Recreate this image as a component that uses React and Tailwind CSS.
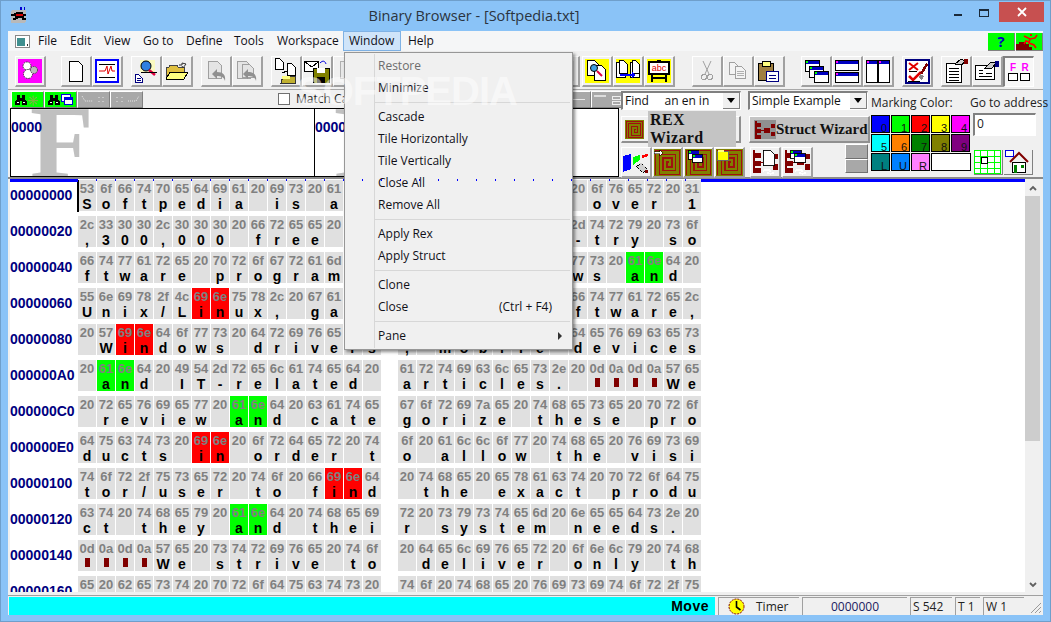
import React from "react";

const ui = "font-['Open_Sans',sans-serif]";
const sans = "font-['Liberation_Sans',sans-serif]";
const serif = "font-['Liberation_Serif',serif]";

const rows = [
  ["00000000", "Softpedia is a l", "ibrary of over 1"],
  ["00000020", ",300,000 free an", "d free-to-try so"],
  ["00000040", "ftware programs ", "for Windows and "],
  ["00000060", "Unix/Linux, game", "s, Mac software,"],
  ["00000080", " Windows drivers", ", mobile devices"],
  ["000000A0", " and IT-related ", "articles. \r\n\r\nWe"],
  ["000000C0", " review and cate", "gorize these pro"],
  ["000000E0", "ducts in order t", "o allow the visi"],
  ["00000100", "tor/user to find", " the exact produ"],
  ["00000120", "ct they and thei", "r system needs. "],
  ["00000140", "\r\n\r\nWe strive to", " deliver only th"],
  ["00000160", "e best products ", "to the visitor/u"],
];

function marks(s) {
  const m = {};
  for (const r of s.matchAll(/an|in/g)) {
    const c = r[0] === "an" ? "bg-[#00ff00]" : "bg-[#ff0000]";
    m[r.index] = c;
    m[r.index + 1] = c;
  }
  return m;
}

function Block({ text, first }) {
  const m = marks(text);
  return (
    <div className="flex gap-px w-[303px] shrink-0">
      {text.split("").map((ch, i) => (
        <div key={i} className={`relative w-[18px] h-[31px] shrink-0 flex flex-col items-center ${m[i] || "bg-[#e0e0e0]"}`}>
          {first && i === 0 && <div className="absolute -left-px top-0 w-[2px] h-[32px] bg-black" />}
          <div className={`h-[17px] leading-[18px] text-[13px] font-bold text-[#808080] ${sans}`}>
            {ch.charCodeAt(0).toString(16).padStart(2, "0")}
          </div>
          {ch === "\r" || ch === "\n" ? (
            <div className="w-[5px] h-[9px] mt-[1px] bg-[#800000]" />
          ) : (
            <div className={`h-[14px] leading-[14px] text-[14px] font-bold text-black ${sans}`}>{ch === " " ? "" : ch}</div>
          )}
        </div>
      ))}
    </div>
  );
}

function Btn({ children, className = "" }) {
  return (
    <div className={`flex items-center justify-center w-[31px] h-[31px] shrink-0 bg-[#f0f0f0] border-t border-l border-t-white border-l-white border-r-2 border-b-2 border-r-[#a0a0a0] border-b-[#a0a0a0] ${className}`}>
      {children}
    </div>
  );
}

const S = ({ children, w = 24, h = 24, vw, vh }) => (
  <svg width={w} height={h} viewBox={`0 0 ${vw || w} ${vh || h}`} shapeRendering="crispEdges">{children}</svg>
);

const Page = ({ x = 0, y = 0, w = 12, h = 16, stroke = "#000", fill = "#fff" }) => (
  <path d={`M${x + 0.5} ${y + 0.5}H${x + w - 4.5}L${x + w - 0.5} ${y + 4.5}V${y + h - 0.5}H${x + 0.5}Z`} fill={fill} stroke={stroke} />
);

const Win = ({ x, y, w, h, dot = "#00ff00" }) => (
  <g>
    <rect x={x + 0.5} y={y + 0.5} width={w} height={h} fill="#fff" stroke="#000" />
    <rect x={x + 1} y={y + 1} width={w - 1} height={3} fill="#0000c0" />
    <rect x={x + 1} y={y + 1} width={2} height={2} fill={dot} />
  </g>
);

const Spiral = ({ s = 28, overlay }) => (
  <svg width={s} height={s} viewBox="0 0 28 28" shapeRendering="crispEdges">
    <rect width="28" height="28" fill="#808000" />
    <path d="M1.5 26.5V1.5H26.5V26.5H5.5V5.5H22.5V22.5H9.5V9.5H18.5V18.5H13.5V13.5H15.5" fill="none" stroke="#a01010" strokeWidth="1.5" />
    {overlay}
  </svg>
);

const Hier = ({ c = "#800000" }) => (
  <g fill={c}>
    <rect x="3" y="4" width="7" height="6" />
    <rect x="3" y="13" width="7" height="6" />
    <rect x="3" y="21" width="7" height="6" />
    <rect x="1" y="1" width="2" height="26" />
    <rect x="14" y="11" width="8" height="7" />
    <rect x="23" y="5" width="6" height="6" />
    <rect x="23" y="17" width="6" height="6" />
    <rect x="10" y="14" width="5" height="1" />
  </g>
);

const Grid = () => (
  <svg width="27" height="24" viewBox="0 0 27 24" shapeRendering="crispEdges">
    <path d="M.5.5h26v23H.5zM.5 6.5h26M.5 12.5h26M.5 18.5h26M6.5.5v23M13.5.5v23M20.5.5v23" fill="#fff" stroke="#00ff00" />
    <rect x="7" y="7" width="6" height="6" fill="#fff" stroke="#000" />
  </svg>
);

const Swatch = ({ c, t, w = "w-[19px]" }) => (
  <div className={`h-[18px] ${w} ${c} border border-black relative shrink-0 text-[11px] leading-[11px] text-[#111] text-right pr-[2px] pt-[7px] ${sans}`}>{t}</div>
);

const Combo = ({ children, w }) => (
  <div className={`${w} h-[19px] bg-white border-t-2 border-l-2 border-t-[#808080] border-l-[#808080] border-r border-b border-r-white border-b-white flex items-center justify-between text-[12px] text-[#111] ${ui}`}>
    <span className="pl-[2px] whitespace-pre">{children}</span>
    <div className="w-[17px] h-[16px] bg-[#f0f0f0] border-r border-b border-r-[#808080] border-b-[#808080] flex items-center justify-center">
      <div className="w-0 h-0 border-x-[4px] border-x-transparent border-t-[5px] border-t-black" />
    </div>
  </div>
);

const SmallBtn = ({ children, c = "bg-[#00ff00]", w = "w-[33px]" }) => (
  <div className={`${w} h-[17px] ${c} shrink-0 border-t border-l border-t-white border-l-white border-r border-b border-r-[#808080] border-b-[#808080] flex items-center justify-center gap-[1px]`}>{children}</div>
);

const Binoc = () => (
  <svg width="12" height="10" viewBox="0 0 12 10" shapeRendering="crispEdges">
    <path d="M2 0h3v3h2V0h3v4l2 3v3H7V6H5v4H0V7l2-3z" fill="#000" />
    <path d="M2 7h2v1H2zM8 7h2v1H8z" fill="#fff" />
  </svg>
);

const Menu = () => {
  const Item = ({ t, dis, right, arrow }) => (
    <div className={`h-[22px] pl-[33px] pr-[20px] flex items-center justify-between text-[12px] whitespace-nowrap ${dis ? "text-[#6d6d6d]" : "text-[#101018]"}`}>
      <span>{t}</span>
      {right && <span>{right}</span>}
      {arrow && <div className="-mr-[10px] w-0 h-0 border-y-[4px] border-y-transparent border-l-[4px] border-l-[#333]" />}
    </div>
  );
  const Sep = () => <div className="ml-[30px] mr-[2px] h-px bg-[#d7d7d7] my-[3px]" style={{ marginBottom: 3 }} />;
  return (
    <div className={`absolute left-[343px] top-[51px] w-[229px] h-[298px] bg-[#f0f0f0] border border-[#979797] shadow-[2px_2px_3px_rgba(0,0,0,0.45)] pt-[2px] ${ui}`}>
      <div className="absolute left-[29px] top-[1px] bottom-[1px] w-px bg-[#d7d7d7]" />
      <div className="h-[0px]" />
      <Item t="Restore" dis />
      <Item t="Minimize" />
      <Sep />
      <Item t="Cascade" />
      <Item t="Tile Horizontally" />
      <Item t="Tile Vertically" />
      <Item t="Close All" />
      <Item t="Remove All" />
      <Sep />
      <Item t="Apply Rex" />
      <Item t="Apply Struct" />
      <Sep />
      <Item t="Clone" />
      <Item t="Close" right="(Ctrl + F4)" />
      <Sep />
      <Item t="Pane" arrow />
    </div>
  );
};

export default function App() {
  return (
    <div className="relative w-[1051px] h-[622px] overflow-hidden bg-[#8ac3f7] border border-[#6f9fcb] flex flex-col">
      {/* title */}
      <div className="h-[30px] shrink-0 flex items-start relative">
        <div className="pl-[9px] pt-[6px] w-[60px]">
          <svg width="18" height="17" viewBox="0 0 18 17" shapeRendering="crispEdges">
            <rect x="1" y="3" width="15" height="13" rx="2" fill="#b9b9b9" />
            <path d="M1 7h3V6h2V5h7v2h3v2h-2v2h2v2h-4v-2H8v1H6v1H3v-2h2V9H1z" fill="#000" />
            <path d="M6 7h7v2H6z" fill="#d00000" />
            <path d="M10 0h2v3h-2zM14 0h1v3h-1z" fill="#0000d0" />
          </svg>
        </div>
        <div className={`flex-1 text-center text-[14.5px] leading-[30px] text-[#2a3440] ${ui}`}>Binary Browser - [Softpedia.txt]</div>
        <div className="w-[60px] flex justify-end" />
        <div className="flex items-start mr-[-0px]">
          <div className="w-[22px] h-[21px] flex items-center justify-center mt-[1px]"><div className="w-[8px] h-[2px] mt-[4px] bg-[#1a2a3a]" /></div>
          <div className="w-[30px] h-[21px] flex items-center justify-center mt-[1px]"><div className="w-[10px] h-[8px] border border-t-2 border-[#1a2a3a]" /></div>
          <div className="w-[45px] h-[20px] bg-[#c75050] flex items-center justify-center mr-[6px] mt-[1px]">
            <svg width="10" height="10" viewBox="0 0 10 10"><path d="M1 1l8 8M9 1l-8 8" stroke="#fff" strokeWidth="1.8" /></svg>
          </div>
        </div>
      </div>

      {/* client */}
      <div className="ml-[7px] w-[1035px] h-[584px] flex flex-col bg-[#f0f0f0] shrink-0">
        {/* menu bar */}
        <div className={`h-[20px] shrink-0 bg-[#f5f6f7] flex items-center text-[12px] text-[#101018] ${ui}`}>
          <div className="w-[30px] pl-[7px] flex items-center">
            <svg width="15" height="13" viewBox="0 0 15 13" shapeRendering="crispEdges">
              <rect x=".5" y=".5" width="14" height="12" fill="#fff" stroke="#888" />
              <rect x="2" y="3" width="8" height="8" fill="#3f8f8f" />
              <rect x="12" y="9" width="1" height="2" fill="#333" />
            </svg>
          </div>
          <div className="w-[32px]">File</div>
          <div className="w-[34px]">Edit</div>
          <div className="w-[39px]">View</div>
          <div className="w-[43px]">Go to</div>
          <div className="w-[48px]">Define</div>
          <div className="w-[43px]">Tools</div>
          <div className="w-[66px]">Workspace</div>
          <div className="w-[58px] h-[20px] bg-[#cfe4f9] border border-[#7fb2e5] pl-[5px] leading-[18px]">Window</div>
          <div className="ml-[7px] w-[580px]">Help</div>
          <div className="w-[27px] h-[18px] mt-[2px] bg-[#00ff00] border-r border-b border-r-[#808080] border-b-[#808080] flex items-center justify-center text-[15px] font-bold text-[#0000c0] leading-none">?</div>
          <div className="w-[27px] h-[18px] mt-[2px] ml-px bg-[#00ff00] border-r border-b border-r-[#808080] border-b-[#808080] flex items-center justify-center">
            <svg width="26" height="17" viewBox="0 0 26 17" shapeRendering="crispEdges">
              <path d="M0 17v-6h3V9h7v2h3v3h3v3z" fill="#800000" />
              <path d="M8 3l6 3 5-1 2-3M14 6l-1 4 5 2 2 3M13 9l-3-1-2 3" fill="none" stroke="#ff0000" strokeWidth="1.6" shapeRendering="auto" />
              <circle cx="15" cy="2" r="1.5" fill="#ff0000" />
            </svg>
          </div>
        </div>

        {/* toolbar */}
        <div className="h-[39px] shrink-0 pl-[7px] pt-[5px] flex border-b border-b-[#a8a8a8]">
          <Btn>
            <div className="w-[24px] h-[24px] bg-[#ff00ff] flex items-center justify-center">
              <svg width="18" height="20" viewBox="0 0 18 20">
                <circle cx="6" cy="5" r="4" fill="#fff" stroke="#333" strokeDasharray="1.5 1" />
                <circle cx="7" cy="13" r="4.5" fill="#fff" stroke="#333" strokeDasharray="1.5 1" />
                <circle cx="13" cy="9" r="3.5" fill="#bbb" stroke="#444" strokeDasharray="1.5 1" />
              </svg>
            </div>
          </Btn>
          <div className="w-[15px] shrink-0" />
          <Btn><S w={14} h={21}><Page w={14} h={21} /></S></Btn>
          <Btn>
            <div className="w-[24px] h-[24px] border-2 border-[#0000ff] bg-white flex items-center justify-center">
              <svg width="18" height="14" viewBox="0 0 18 14">
                <path d="M1 .5h16M1 13.5h16" stroke="#000" shapeRendering="crispEdges" />
                <path d="M1 7h6l2-5 1 8 3-8 1 5h3" fill="none" stroke="#e00000" />
              </svg>
            </div>
          </Btn>
          <div className="w-[8px] shrink-0" />
          <Btn>
            <S w={24} h={24}>
              <Page x={1} y={15} w={8} h={9} stroke="#000080" />
              <path d="M3 19h4M3 21h4" stroke="#000080" />
              <rect x="6" y="1" width="15" height="12" fill="#ffffa0" opacity=".6" />
              <circle cx="12" cy="7" r="5" fill="#3080e0" stroke="#000" shapeRendering="auto" />
              <path d="M15 11l6 5" stroke="#e00040" strokeWidth="2.5" shapeRendering="auto" />
              <path d="M7 13h16" stroke="#000" />
            </S>
          </Btn>
          <Btn>
            <S w={22} h={18}>
              <path d="M0 5h3l1-2h7l1 2h6v11H0z" fill="#e0c040" stroke="#444" />
              <path d="M4 10h18l-4 7H0z" fill="#ffff80" stroke="#000" />
              <path d="M13 3h3V1l4 1-3 4-1-2" fill="none" stroke="#333" shapeRendering="auto" />
            </S>
          </Btn>
          <div className="w-[8px] shrink-0" />
          {[0, 1].map((k) => (
            <Btn key={k}>
              <S w={24} h={24}>
                <Page x={k ? 2 : 4} y={2} w={14} h={18} stroke="#a0a0a0" fill="#e4e4e4" />
                {k === 1 && <Page x={7} y={5} w={12} h={14} stroke="#a0a0a0" fill="#e4e4e4" />}
                <path d="M8 15l5-5v3c6 0 9 3 8 9-1-4-4-5-8-5v3z" fill="#909090" shapeRendering="auto" />
              </S>
            </Btn>
          ))}
          <div className="w-[8px] shrink-0" />
          <Btn>
            <S w={24} h={26}>
              <Page x={1} y={0} w={9} h={12} />
              <Page x={13} y={5} w={9} h={13} />
              <path d="M8 15l5-2" stroke="#000" />
              <path d="M9 18h12v7H7z" fill="#c0b030" stroke="#333" />
              <rect x="8" y="18" width="8" height="3" fill="#ffff80" />
            </S>
          </Btn>
          <Btn>
            <S w={26} h={24}>
              <rect x=".5" y="2.5" width="14" height="10" fill="#fff" stroke="#000" />
              <path d="M1 3l7 5 6-5" fill="none" stroke="#000" />
              <rect x="9" y="9" width="16" height="15" fill="#808000" stroke="#000" />
              <rect x="13" y="9" width="8" height="5" fill="#fff" />
              <rect x="13" y="18" width="8" height="6" fill="#000" />
              <path d="M16 4c3-3 5-2 6 1" fill="none" stroke="#0000e0" shapeRendering="auto" />
            </S>
          </Btn>
          <Btn><S w={24} h={24}><Page x={4} y={2} w={14} h={18} stroke="#b0b0b0" fill="#e8e8e8" /></S></Btn>
          <div className="w-[185px] shrink-0" />
          <Btn><div className="w-[20px] h-[20px] bg-[#e0e0e0]" /></Btn>
          <div className="w-[2px] shrink-0" />
          <Btn>
            <div className="w-[24px] h-[24px] bg-[#ffff00] flex items-center justify-center">
              <S w={20} h={22}>
                <Page x={0} y={0} w={12} h={16} />
                <Page x={7} y={5} w={12} h={16} />
                <circle cx="7" cy="8" r="3.5" fill="#40a0e0" stroke="#000" shapeRendering="auto" />
                <path d="M10 11l5 5" stroke="#e00040" strokeWidth="2" shapeRendering="auto" />
              </S>
            </div>
          </Btn>
          <Btn>
            <div className="w-[24px] h-[24px] bg-[#ffff00] flex items-center justify-center">
              <S w={24} h={22}>
                <Page x={0} y={2} w={10} h={16} />
                <Page x={3} y={0} w={9} h={14} />
                <Page x={14} y={2} w={10} h={16} />
                <Page x={16} y={0} w={8} h={14} />
                <path d="M4 15h14" stroke="#0000ff" strokeWidth="2" />
                <path d="M16 12l4 3-4 3z" fill="#0000ff" />
              </S>
            </div>
          </Btn>
          <Btn>
            <div className="w-[24px] h-[24px] bg-[#ffff00] flex items-center justify-center">
              <S w={22} h={22}>
                <rect x="1" y="2" width="20" height="12" fill="#fff" stroke="#000" strokeWidth="2" />
                <text x="11" y="11" textAnchor="middle" fontSize="9" fill="#e00000" fontFamily="Liberation Sans">abc</text>
                <path d="M4 15v7M18 15v7M4 18h14" stroke="#000" strokeWidth="2" />
                <path d="M9 0h4v2H9z" fill="#000" />
              </S>
            </div>
          </Btn>
          <div className="w-[17px] shrink-0" />
          <Btn>
            <S w={12} h={20}>
              <path d="M2 0l6 13M10 0L4 13" stroke="#a0a0a0" fill="none" shapeRendering="auto" />
              <circle cx="3" cy="16" r="2.5" fill="none" stroke="#a0a0a0" />
              <circle cx="9" cy="16" r="2.5" fill="none" stroke="#a0a0a0" />
            </S>
          </Btn>
          <Btn>
            <S w={18} h={18}>
              <Page x={0} y={0} w={10} h={13} stroke="#a0a0a0" fill="#f4f4f4" />
              <Page x={6} y={4} w={11} h={13} stroke="#a0a0a0" fill="#f4f4f4" />
              <path d="M8 9h7M8 11h7M8 13h7" stroke="#b0b0b0" />
            </S>
          </Btn>
          <Btn>
            <S w={22} h={22}>
              <rect x=".5" y="3.5" width="15" height="17" fill="#a08040" stroke="#000" />
              <rect x="4" y="1" width="8" height="5" fill="#ffff80" stroke="#000" />
              <rect x="8.5" y="11.5" width="12" height="10" fill="#fff" stroke="#000080" strokeWidth="1.5" />
              <path d="M11 15h7M11 18h7" stroke="#000080" />
            </S>
          </Btn>
          <div className="w-[16px] shrink-0" />
          <Btn>
            <S w={25} h={24}>
              <Win x={1} y={1} w={14} h={11} />
              <Win x={5} y={7} w={14} h={11} />
              <Win x={10} y={12} w={14} h={11} />
            </S>
          </Btn>
          <Btn>
            <S w={24} h={24}>
              <Win x={0} y={1} w={23} h={10} dot="#ff00ff" />
              <Win x={0} y={13} w={23} h={10} dot="#ff00ff" />
            </S>
          </Btn>
          <Btn>
            <S w={24} h={24}>
              <Win x={0} y={1} w={11} h={22} dot="#ff00ff" />
              <Win x={12} y={1} w={11} h={22} dot="#ff00ff" />
            </S>
          </Btn>
          <div className="w-[8px] shrink-0" />
          <Btn>
            <div className="w-[25px] h-[25px] border-2 border-[#000080] bg-white flex items-center justify-center">
              <S w={21} h={21}>
                <path d="M2 2l9 7M11 2L2 9" stroke="#e00000" strokeWidth="2" shapeRendering="auto" />
                <path d="M2 15l4 4 8-8" fill="none" stroke="#e00000" strokeWidth="2.5" shapeRendering="auto" />
                <path d="M2 10h8M1 20h12" stroke="#000" />
                <path d="M13 12l7-11 1 3-6 10z" fill="#800000" />
                <path d="M13 13l4 2-2 4-3-2z" fill="#888" />
              </S>
            </div>
          </Btn>
          <div className="w-[8px] shrink-0" />
          <Btn>
            <S w={24} h={24}>
              <path d="M2.5 4.5h15v19h-15z" fill="#fff" stroke="#000" strokeWidth="1.5" />
              <path d="M5 9h10M5 12h10M5 15h10M5 18h10M5 21h10" stroke="#000" />
              <path d="M11 5l6-5 4 2-3 4z" fill="#ccc" stroke="#000" />
              <rect x="20" y="0" width="4" height="5" fill="#800000" />
            </S>
          </Btn>
          <Btn>
            <S w={26} h={22}>
              <rect x="1.5" y="5.5" width="19" height="14" fill="#fff" stroke="#000" strokeWidth="1.5" />
              <path d="M5 10h4M5 13h4M12 13h6M5 16h13" stroke="#000" />
              <path d="M11 8l6-6 5 1-4 5z" fill="#ccc" stroke="#000" />
              <rect x="21" y="1" width="4" height="6" fill="#000080" />
            </S>
          </Btn>
          <div className="w-[31px] h-[31px] shrink-0 border-t-2 border-l-2 border-t-[#808080] border-l-[#808080] border-r border-b border-r-white border-b-white flex items-center justify-center bg-[#f8f8f8]">
            <div className={`grid grid-cols-2 gap-x-[2px] text-[10px] font-bold leading-[10px] text-[#ff00ff] text-center ${sans}`}>
              <span>F</span><span>R</span>
              <div className="w-[10px] h-[8px] bg-white border border-black" />
              <div className="w-[10px] h-[8px] bg-white border border-black" />
            </div>
          </div>
        </div>

        {/* mid band */}
        <div className="h-[89px] shrink-0 flex border-b-2 border-b-[#8a8a8a]">
          <div className="w-[611px] shrink-0 flex flex-col pl-[2px]">
            <div className="h-[18px] pl-px pt-px flex shrink-0">
              <SmallBtn><Binoc /><span className="text-[10px] leading-none text-[#000] font-bold">✳</span></SmallBtn>
              <SmallBtn><Binoc /><svg width="12" height="11" viewBox="0 0 12 11" shapeRendering="crispEdges"><rect x=".5" y=".5" width="9" height="7" fill="#fff" stroke="#0000e0" /><rect x="3.5" y="3.5" width="8" height="7" fill="#fff" stroke="#0000e0" /><rect x="4" y="4" width="7" height="2" fill="#0000e0" /></svg></SmallBtn>
              <SmallBtn c="bg-[#a8a8a8]">
                <svg width="26" height="9" viewBox="0 0 26 9"><path d="M1 1l3 5h8M18 2v2M18 6v1M22 2v2M22 6v1" stroke="#e8e8e8" fill="none" strokeDasharray="1 1" /></svg>
              </SmallBtn>
              <SmallBtn c="bg-[#a8a8a8]">
                <svg width="26" height="9" viewBox="0 0 26 9"><path d="M3 2v2M3 6v1M8 2v2M8 6v1M14 6h8l3-5" stroke="#e8e8e8" fill="none" strokeDasharray="1 1" /></svg>
              </SmallBtn>
              <div className="w-[135px] shrink-0" />
              <div className="w-[12px] h-[12px] mt-[2px] bg-white border border-[#707070] shrink-0" />
              <div className={`ml-[6px] w-[262px] shrink-0 text-[12px] leading-[16px] text-[#222] ${ui}`}>Match Case</div>
              <SmallBtn c="bg-[#a8a8a8]"><div className="w-[20px] h-px bg-[#e8e8e8]" /></SmallBtn>
              <SmallBtn c="bg-[#a8a8a8]">
                <svg width="28" height="12" viewBox="0 0 28 12" shapeRendering="crispEdges"><path d="M0 1h12v2H0z" fill="#ddd" /><path d="M18 2h8v3h-8zM18 7h8v3h-8z" fill="#a8a8a8" stroke="#eee" /></svg>
              </SmallBtn>
            </div>
            <div className="h-[71px] w-[609px] ml-0 border border-black bg-white flex overflow-hidden">
              <div className="relative w-[304px] shrink-0 border-r border-black overflow-hidden">
                <div className={`absolute left-[19px] top-[-22px] text-[104px] leading-[110px] font-bold text-[#c0c0c0] ${serif}`}>F</div>
                <div className={`absolute left-0 top-[8px] text-[14px] font-bold text-[#000080] ${sans}`}>0000</div>
              </div>
              <div className="relative flex-1 overflow-hidden">
                <div className={`absolute left-[19px] top-[-22px] text-[104px] leading-[110px] font-bold text-[#c0c0c0] ${serif}`}>F</div>
                <div className={`absolute left-0 top-[8px] text-[14px] font-bold text-[#000080] ${sans}`}>0000</div>
              </div>
            </div>
          </div>

          <div className="w-[252px] shrink-0 pl-[2px] flex flex-col">
            <div className="flex gap-[7px] mt-[1px]">
              <Combo w="w-[120px]">Find     an en in</Combo>
              <Combo w="w-[120px]">Simple Example</Combo>
            </div>
            <div className="flex gap-[8px] mt-[6px]">
              <div className={`w-[120px] h-[27px] border-t border-l border-t-white border-l-white border-r-2 border-b-2 border-r-[#909090] border-b-[#909090] flex items-center pl-[3px] text-[16px] font-bold text-[#111] ${serif}`}>
                <Spiral s={19} />
                <span className="ml-[4px] px-[2px] bg-[#c4c4c4] leading-[18px] tracking-[0.4px] flex-1 mr-[3px]">REX Wizard</span>
              </div>
              <div className={`w-[121px] h-[27px] bg-[#c4c4c4] border-t border-l border-t-white border-l-white border-r-2 border-b-2 border-r-[#909090] border-b-[#909090] flex items-center pl-[4px] text-[15px] font-bold text-[#111] whitespace-nowrap ${serif}`}>
                <div className="bg-[#909090] h-[19px] shrink-0 flex items-center">
                  <svg width="22" height="19" viewBox="0 0 30 27" shapeRendering="crispEdges"><Hier /></svg>
                </div>
                <span>Struct Wizard</span>
              </div>
            </div>
            <div className="flex mt-[4px] h-[31px]">
              <Btn>
                <S w={26} h={24}>
                  <path d="M0 6l8-2v15l-8 3z" fill="#0000ff" />
                  <path d="M10 7l7-2v5l-7 5z" fill="#00ff00" />
                  <path d="M19 5l6-1v2l-6 2z" fill="#ff0000" />
                  <path d="M13 17l5-4 6 6-3 4z" fill="#d0d0d0" stroke="#000" strokeDasharray="1 1" />
                  <rect x="22" y="20" width="3" height="3" fill="#800000" />
                </S>
              </Btn>
              <Btn><Spiral s={27} overlay={<path d="M0 3h6V1l3 3-3 3V5H0z" fill="#fff" stroke="#000" strokeWidth=".5" />} /></Btn>
              <Btn className="border-t-[#808080] border-l-[#808080]">
                <Spiral s={27} overlay={<g><Win x={3} y={1} w={11} h={9} /><Win x={7} y={5} w={11} h={9} /></g>} />
              </Btn>
              <Btn><Spiral s={27} overlay={<g><rect x="1.5" y="2.5" width="11" height="9" fill="#ffff00" stroke="#666" /><rect x="2" y="1" width="6" height="2" fill="#ffff80" /></g>} /></Btn>
              <div className="w-[5px] shrink-0" />
              <Btn className="bg-[#808080]">
                <svg width="27" height="27" viewBox="0 0 30 30" shapeRendering="crispEdges">
                  <Hier />
                  <path d="M12.5 1.5h8l5 5v12h-13z" fill="#fff" stroke="#000" />
                  <path d="M12 25c3-3 6-3 9 0M24 26c-2 2-5 2-7 0" fill="none" stroke="#fff" strokeWidth="2" />
                </svg>
              </Btn>
              <div className="w-[1px] shrink-0" />
              <Btn className="bg-[#008000]">
                <svg width="27" height="27" viewBox="0 0 30 30" shapeRendering="crispEdges">
                  <Hier />
                  <Win x={7} y={1} w={12} h={9} />
                  <Win x={11} y={5} w={12} h={9} />
                  <path d="M12 25c3-3 6-3 9 0M24 26c-2 2-5 2-7 0" fill="none" stroke="#fff" strokeWidth="2" />
                </svg>
              </Btn>
              <div className="w-[32px] shrink-0" />
              <div className="flex flex-col -mt-[3px] shrink-0">
                <div className="w-[23px] h-[15px] bg-[#a8a8a8] border-t border-l border-t-white border-l-white border-r border-b border-r-[#707070] border-b-[#707070]" />
                <div className="w-[23px] h-[14px] bg-[#a8a8a8] border-t border-l border-t-white border-l-white border-r border-b border-r-[#707070] border-b-[#707070]" />
              </div>
            </div>
          </div>

          <div className="flex-1 flex flex-col">
            <div className={`h-[25px] flex text-[12px] leading-[25px] text-[#222] whitespace-nowrap ${ui}`}>
              <div className="w-[99px] ml-[0px]">Marking Color:</div>
              <div>Go to address</div>
            </div>
            <div className="flex">
              <div className="w-[100px] shrink-0 flex flex-col gap-px">
                <div className="flex gap-px">
                  <Swatch c="bg-[#0000ff]" t="0" />
                  <Swatch c="bg-[#00ff00]" t="1" />
                  <Swatch c="bg-[#ff0000]" t="2" />
                  <Swatch c="bg-[#ffff00]" t="3" />
                  <Swatch c="bg-[#ff00ff]" t="4" />
                </div>
                <div className="flex gap-px">
                  <Swatch c="bg-[#00ffff]" t="5" />
                  <Swatch c="bg-[#ff8000]" t="6" />
                  <Swatch c="bg-[#008000]" t="7" />
                  <Swatch c="bg-[#808000]" t="8" />
                  <Swatch c="bg-[#800080]" t="9" />
                </div>
                <div className="flex gap-px">
                  <Swatch c="bg-[#008080]" t="L" />
                  <Swatch c="bg-[#0080ff]" t="U" />
                  <Swatch c="bg-[#ff80ff]" t="R" />
                  <Swatch c="bg-white" t="" w="w-[40px]" />
                </div>
              </div>
              <div className="ml-[2px] flex flex-col -mt-[2px]">
                <div className={`w-[63px] h-[23px] bg-white border-t-2 border-l-2 border-t-[#808080] border-l-[#808080] border-r border-b border-r-white border-b-white pl-[2px] text-[12px] leading-[18px] text-[#222] ${ui}`}>0</div>
                <div className="flex mt-[14px] ml-[1px] gap-px">
                  <div className="w-[29px] h-[25px] bg-[#f0f0f0] border-r border-b border-r-[#808080] border-b-[#808080]"><Grid /></div>
                  <div className="w-[29px] h-[25px] bg-[#f0f0f0] border-r border-b border-r-[#808080] border-b-[#808080] flex items-center justify-center">
                    <S w={27} h={24}>
                      <rect x=".5" y=".5" width="8" height="6" fill="#fff" stroke="#0000e0" />
                      <path d="M5 12l9-9 9 9" fill="none" stroke="#800000" strokeWidth="2" shapeRendering="auto" />
                      <path d="M7.5 12.5h13v10h-13z" fill="#fff" stroke="#000" />
                      <rect x="9" y="15" width="3" height="8" fill="#008000" />
                      <rect x="16" y="15" width="3" height="3" fill="#008000" />
                    </S>
                  </div>
                </div>
              </div>
            </div>
          </div>
        </div>

        {/* hex area */}
        <div className="h-[416px] shrink-0 flex pl-[2px]">
          <div className="relative flex-1 bg-white overflow-hidden h-[413px] pt-[1px]">
            <div className="absolute inset-x-0 top-0 h-[3px] flex z-10">
              <div className="w-[68px] bg-[#0000ff] shrink-0" />
              <div className="w-[623px] flex items-start shrink-0">
                {Array.from({ length: 33 }).map((_, i) => (
                  <div key={i} className="w-[19px] h-[2px] shrink-0 flex justify-end"><div className="w-px bg-[#0000ff]" /></div>
                ))}
              </div>
              <div className="flex-1 bg-[#0000ff]" />
            </div>
            {rows.map((r, i) => (
              <div key={r[0]} className="flex h-[36px]">
                <div className={`w-[68px] shrink-0 h-[31px] leading-[31px] text-[14px] font-bold text-[#000080] ${sans}`}>{r[0]}</div>
                <Block text={r[1]} first={i === 0} />
                <div className="w-[17px] shrink-0" />
                <Block text={r[2]} />
              </div>
            ))}
          </div>
          <div className="w-[18px] shrink-0 bg-[#f0f0f0] flex flex-col items-start h-[414px]">
            <div className="h-[17px] w-[15px] flex items-center justify-center">
              <svg width="8" height="6" viewBox="0 0 8 6"><path d="M1 5l3-3 3 3" fill="none" stroke="#606060" strokeWidth="1.8" /></svg>
            </div>
            <div className="h-[245px] w-[15px] bg-[#cdcdcd]" />
            <div className="flex-1" />
            <div className="h-[17px] w-[15px] flex items-center justify-center">
              <svg width="8" height="6" viewBox="0 0 8 6"><path d="M1 1l3 3 3-3" fill="none" stroke="#606060" strokeWidth="1.8" /></svg>
            </div>
          </div>
        </div>

        {/* status */}
        <div className="flex-1 flex items-stretch border-t border-t-[#a0a0a0] pt-px min-h-0">
          <div className={`w-[706px] shrink-0 ml-px bg-[#00ffff] flex justify-end items-center pr-[6px] text-[14px] font-bold text-black tracking-[0.5px] ${sans}`}>Move</div>
          <div className={`ml-[3px] w-[81px] shrink-0 border-t border-l border-[#a0a0a0] flex items-center pl-[9px] text-[12px] text-[#222] ${ui}`}>
            <svg width="17" height="17" viewBox="0 0 17 17"><circle cx="8.5" cy="8.5" r="7.5" fill="#ffff00" stroke="#800000" strokeDasharray="2 1" /><path d="M8.5 3v6l4 3" fill="none" stroke="#000" strokeWidth="1.6" /></svg>
            <span className="ml-[11px]">Timer</span>
          </div>
          <div className={`ml-[3px] w-[105px] shrink-0 border-t border-l border-[#a0a0a0] text-center text-[12px] leading-[17px] text-[#1a2060] ${ui}`}>0000000</div>
          <div className={`ml-[3px] w-[42px] shrink-0 border-t border-l border-[#a0a0a0] pl-[2px] text-[12px] leading-[17px] text-[#222] ${ui}`}>S 542</div>
          <div className={`ml-[3px] w-[25px] shrink-0 border-t border-l border-[#a0a0a0] pl-[2px] text-[12px] leading-[17px] text-[#222] ${ui}`}>T 1</div>
          <div className={`ml-[3px] w-[41px] shrink-0 border-t border-l border-[#a0a0a0] pl-[2px] text-[12px] leading-[17px] text-[#222] ${ui}`}>W 1</div>
          <div className="flex-1 flex items-end justify-end pr-[1px] pb-[1px]">
            <svg width="12" height="12" viewBox="0 0 12 12"><path d="M11 1L1 11M11 5L5 11M11 9l-2 2" stroke="#9a9a9a" /></svg>
          </div>
        </div>
      </div>

      <Menu />
      <div className={`absolute left-[296px] top-[68px] text-[40px] leading-[44px] font-bold text-white/50 pointer-events-none tracking-[-1px] ${sans}`}>SOFTPEDIA</div>
    </div>
  );
}
